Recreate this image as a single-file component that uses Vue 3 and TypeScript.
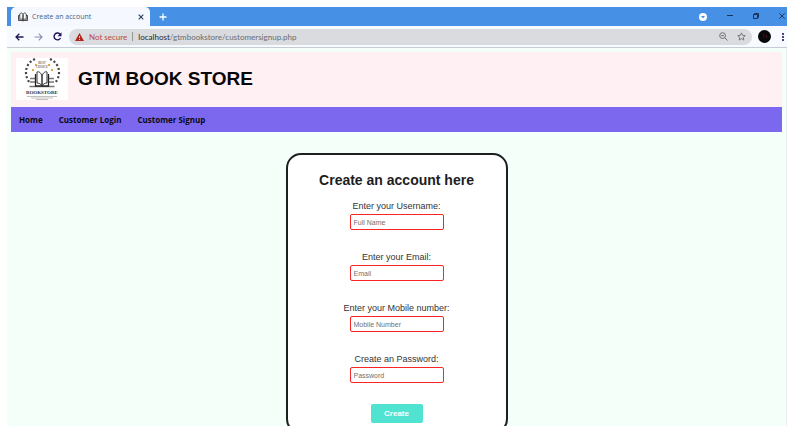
<script setup lang="ts">
import { reactive, ref } from 'vue'

interface Field {
  id: string
  label: string
  placeholder: string
  type: string
}

const fields: Field[] = [
  { id: 'username', label: 'Enter your Username:', placeholder: 'Full Name', type: 'text' },
  { id: 'email', label: 'Enter your Email:', placeholder: 'Email', type: 'email' },
  { id: 'mobile', label: 'Enter your Mobile number:', placeholder: 'Mobile Number', type: 'tel' },
  { id: 'password', label: 'Create an Password:', placeholder: 'Password', type: 'password' },
]

const links: string[] = ['Home', 'Customer Login', 'Customer Signup']
const values = reactive<Record<string, string>>({ username: '', email: '', mobile: '', password: '' })
const submitted = ref(false)
</script>

<template>
  <div class="window">
    <div class="tabstrip">
      <div class="tab">
        <svg class="favicon" viewBox="0 0 20 20" aria-hidden="true">
          <path d="M3.500 7H1v10h7.500l1.500 1.500 1.500-1.500H19V7h-2.500M3.500 15V4C5.500 1 8.500 1.500 10 5v12C8.500 14 6 13.500 3.500 15zM16.500 15V4C14.500 1 11.500 1.500 10 5v12c1.500-3 4-3.500 6.500-2z" fill="#fff" stroke="#222" stroke-width="1.600" />
        </svg>
        <span class="tab-title">Create an account</span>
        <button class="icon-btn" type="button" aria-label="Close tab">
          <svg width="6" height="6" viewBox="0 0 6 6"><path d="M.7.7l4.600 4.600M5.300.7L.7 5.300" stroke="#263c5c" stroke-width="1.100" /></svg>
        </button>
      </div>
      <button class="icon-btn new-tab" type="button" aria-label="New tab">
        <svg width="8" height="8" viewBox="0 0 8 8"><path d="M4 .5v7M.5 4h7" stroke="#fff" stroke-width="1.300" /></svg>
      </button>
      <div class="controls">
        <button class="icon-btn" type="button" aria-label="Search tabs">
          <svg width="8" height="8" viewBox="0 0 8 8"><circle cx="4" cy="4" r="4" fill="#fff" /><path d="M2 3h4L4 5.500z" fill="#4690e6" /></svg>
        </button>
        <button class="icon-btn" type="button" aria-label="Minimize">
          <svg width="6" height="8" viewBox="0 0 6 8"><path d="M0 2.500h6" stroke="#1b3354" /></svg>
        </button>
        <button class="icon-btn" type="button" aria-label="Restore">
          <svg width="6" height="8" viewBox="0 0 6 8"><path d="M.5 1.500h4v4h-4zM1.500 1.500v-1h4v4h-1" fill="none" stroke="#1b3354" /></svg>
        </button>
        <button class="icon-btn" type="button" aria-label="Close">
          <svg width="6" height="8" viewBox="0 0 6 8"><path d="M.3.300l5.400 5.400M5.700.3L.3 5.700" stroke="#1b3354" stroke-width=".9" /></svg>
        </button>
      </div>
    </div>

    <div class="toolbar">
      <button class="icon-btn" type="button" aria-label="Back">
        <svg width="9" height="8" viewBox="0 0 9 8"><path d="M8.500 4H1.200M4.300.7L1 4l3.300 3.300" fill="none" stroke="#211655" stroke-width="1.300" /></svg>
      </button>
      <button class="icon-btn" type="button" aria-label="Forward">
        <svg width="9" height="8" viewBox="0 0 9 8"><path d="M.5 4h7.300M4.700.7L8 4 4.700 7.300" fill="none" stroke="#8f8baf" stroke-width="1.100" /></svg>
      </button>
      <button class="icon-btn" type="button" aria-label="Reload">
        <svg width="9" height="9" viewBox="0 0 9 9"><path d="M7.500 6A3.400 3.400 0 1 1 7 2.200" fill="none" stroke="#211655" stroke-width="1.400" /><path d="M8.500.3v3.900H4.600z" fill="#211655" /></svg>
      </button>
      <div class="address">
        <svg width="9" height="8" viewBox="0 0 9 8" aria-hidden="true"><path d="M4.500 0L9 8H0z" fill="#b3261e" /><path d="M4.500 3v2.200M4.500 6v1" stroke="#e6d5d8" stroke-width=".9" /></svg>
        <span class="warning">Not secure</span>
        <span class="divider"></span>
        <span class="url"><span class="host">localhost</span>/gtmbookstore/customersignup.php</span>
        <button class="icon-btn" type="button" aria-label="Zoom out">
          <svg width="9" height="9" viewBox="0 0 9 9"><circle cx="3.600" cy="3.600" r="2.900" fill="none" stroke="#6d6e74" /><path d="M5.800 5.800l2.700 2.700M2.200 3.600H5" stroke="#6d6e74" /></svg>
        </button>
        <button class="icon-btn" type="button" aria-label="Bookmark this page">
          <svg width="9" height="9" viewBox="0 0 18 18"><path d="M9 1.800l2.200 4.900 5.300.5-4 3.600 1.200 5.300L9 13.300l-4.700 2.800 1.200-5.300-4-3.600 5.300-.5z" fill="none" stroke="#6d6e74" stroke-width="1.800" /></svg>
        </button>
      </div>
      <button class="icon-btn" type="button" aria-label="Profile">
        <svg width="13" height="13" viewBox="0 0 13 13"><circle cx="6.500" cy="6.500" r="6.500" fill="#08080a" /><path d="M5 4l1.500 1M8 5l1 3M5 8l1-1.500" stroke="#681820" stroke-width=".8" /></svg>
      </button>
      <button class="icon-btn menu" type="button" aria-label="Menu">
        <svg width="2" height="8" viewBox="0 0 2 8"><path d="M0 0h2v2H0zM0 3h2v2H0zM0 6h2v2H0z" fill="#4b4375" /></svg>
      </button>
    </div>

    <div class="page">
      <header class="banner">
        <svg class="logo" viewBox="0 0 52 42" role="img" aria-label="Bookstore logo">
          <rect width="52" height="42" fill="#fff" />
          <path d="M19 1C8 6 8 18 14 25M34 1c11 5 11 17 5 24" fill="none" stroke="#444" stroke-width="2.200" stroke-dasharray="2 2.200" />
          <path d="M16 12h2M19 7h2M32 7h2M35 12h2" stroke="#d9ad45" stroke-width="2" />
          <text class="logo-small" x="26" y="6">BEST</text>
          <text class="logo-small" x="26" y="10">CHOICE</text>
          <path d="M14 20.500h5M33 20.500h5M14 24h5M33 24h5M13.500 28.500h25" stroke="#777" stroke-width="1.300" />
          <path d="M19.500 16v12h13V16" fill="#fff" stroke="#222" stroke-width="1.300" />
          <path d="M21 14c2-1 4 1 5 4v10c-1-2-3-3-5-3zM31 14c-2-1-4 1-5 4v10c1-2 3-3 5-3z" fill="#fff" stroke="#333" stroke-width="1" />
          <text class="logo-name" x="26" y="36">BOOKSTORE</text>
          <path d="M11 38.500h30M15 40h22M20 41.500h12" stroke="#999" stroke-width=".6" />
        </svg>
        <h1>GTM BOOK STORE</h1>
      </header>

      <nav>
        <a v-for="link in links" :key="link" href="#">{{ link }}</a>
      </nav>

      <main>
        <form class="card" @submit.prevent="submitted = true">
          <h2>Create an account here</h2>
          <div v-for="field in fields" :key="field.id" class="field">
            <label :for="field.id">{{ field.label }}</label>
            <input :id="field.id" v-model="values[field.id]" :type="field.type" :placeholder="field.placeholder" />
          </div>
          <button class="create" type="submit">Create</button>
        </form>
      </main>
    </div>
  </div>
</template>

<style>
body {
  background: #fff;
}
</style>

<style scoped>
* {
  box-sizing: border-box;
}

.window {
  display: flex;
  flex-direction: column;
  height: calc(100vh - 8px);
  margin: 7px 6px 1px 7px;
  overflow: hidden;
  font-family: "Open Sans", "Noto Sans", sans-serif;
}

.icon-btn {
  display: flex;
  flex: none;
  padding: 0;
  border: 0;
  background: none;
}

.icon-btn svg {
  display: block;
}

.tabstrip {
  display: flex;
  flex: none;
  align-items: center;
  height: 19px;
  padding-left: 4px;
  background: #4690e6;
}

.tab {
  display: flex;
  align-items: center;
  width: 139px;
  height: 19px;
  padding: 0 6px 0 7px;
  border-radius: 5px 5px 0 0;
  background: #f5f9ff;
}

.favicon {
  flex: none;
  width: 10px;
  height: 10px;
}

.tab-title {
  flex: 1;
  margin-left: 4px;
  color: #4c607c;
  font-size: 7px;
  line-height: 10px;
}

.new-tab {
  margin-left: 9px;
}

.controls {
  display: flex;
  align-items: center;
  gap: 20px;
  height: 16px;
  margin-left: auto;
  padding-right: 2px;
}

.toolbar {
  display: flex;
  flex: none;
  align-items: center;
  gap: 10px;
  height: 22px;
  padding: 0 3px 0 8px;
  border-bottom: 1px solid #c6ccd4;
  background: #f7faff;
}

.address {
  display: flex;
  flex: 1;
  align-items: center;
  height: 16px;
  margin: 0 -4px 0 -3px;
  padding: 0 6px;
  border-radius: 8px;
  background: #d9dbdf;
  font-family: Lato, "Open Sans", sans-serif;
  font-size: 8px;
  line-height: 12px;
}

.warning {
  margin-left: 5px;
  color: #b84a48;
}

.divider {
  width: 1px;
  height: 9px;
  margin: 0 5px;
  background: #96989c;
}

.url {
  flex: 1;
  color: #686b70;
}

.host {
  color: #24272b;
}

.address .icon-btn {
  margin-left: 9px;
}

.menu {
  margin-left: 1px;
}

.page {
  flex: 1;
  min-height: 0;
  padding: 4px;
  border-right: 1px solid #eceef1;
  background: #f4fffa;
}

.banner {
  display: flex;
  align-items: center;
  gap: 10px;
  height: 55px;
  padding: 0 5px 2px;
  background: #fff0f4;
}

.logo {
  width: 52px;
  height: 42px;
}

.logo text {
  text-anchor: middle;
  font-family: "Liberation Serif", serif;
  font-weight: bold;
}

.logo-small {
  fill: #777;
  font-size: 3px;
}

.logo-name {
  fill: #333;
  font-size: 5px;
}

h1,
h2 {
  margin: 0;
  font-family: "Liberation Sans", Arial, sans-serif;
  font-weight: bold;
}

h1 {
  color: #080608;
  font-size: 19px;
  line-height: 24px;
}

nav {
  display: flex;
  align-items: center;
  gap: 16px;
  height: 25px;
  padding: 1px 8px 0;
  background: #7b68ee;
}

nav a {
  color: #0b0912;
  font-size: 8px;
  font-weight: bold;
  line-height: 12px;
  text-decoration: none;
}

main {
  display: flex;
  justify-content: center;
  padding-top: 21px;
}

.card {
  display: flex;
  flex-direction: column;
  align-items: center;
  width: 222px;
  padding: 17px 0 9px;
  border: 2px solid #1c2022;
  border-radius: 15px;
  background: #fff;
  font-family: "Liberation Sans", Arial, sans-serif;
}

h2 {
  margin-bottom: 12px;
  color: #1d1d1f;
  font-size: 14px;
  line-height: 16px;
}

.field {
  display: flex;
  flex-direction: column;
  align-items: center;
  gap: 2px;
  margin-bottom: 21px;
}

label {
  color: #333;
  font-size: 9px;
  line-height: 12px;
}

input {
  width: 94px;
  height: 16px;
  padding: 0 3px;
  border: 1px solid #fb2424;
  border-radius: 2px;
  outline: 0;
  background: #fff;
  color: #333;
  font-family: inherit;
  font-size: 7px;
}

input::placeholder {
  color: #707070;
  opacity: 1;
}

.create {
  width: 52px;
  height: 19px;
  padding: 0;
  border: 0;
  border-radius: 2px;
  background: #50e3d2;
  color: #fff;
  font-family: inherit;
  font-size: 8px;
  font-weight: bold;
}
</style>
